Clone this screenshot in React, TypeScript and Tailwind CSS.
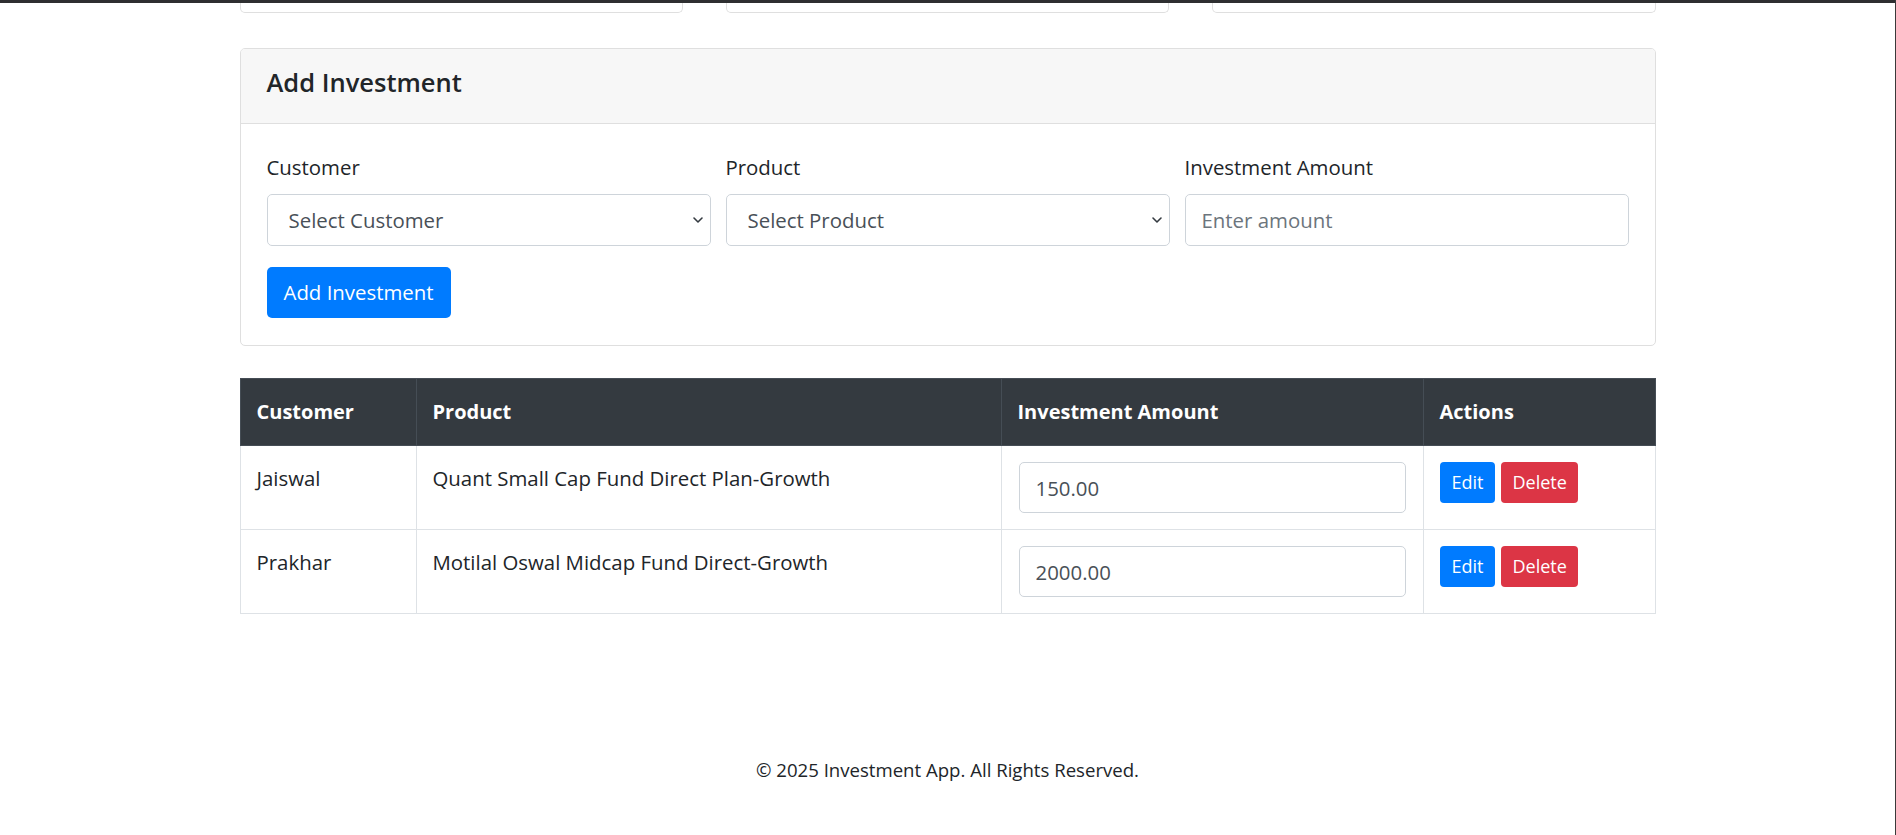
import React from "react";

const rows = [
  { customer: "Jaiswal", product: "Quant Small Cap Fund Direct Plan-Growth", amount: "150.00" },
  { customer: "Prakhar", product: "Motilal Oswal Midcap Fund Direct-Growth", amount: "2000.00" },
];

function Chevron() {
  return (
    <svg width="12" height="8" viewBox="0 0 12 8" className="pointer-events-none absolute right-[7px] top-1/2 -translate-y-1/2">
      <path d="M2 2 L6 6 L10 2" fill="none" stroke="#343a40" strokeWidth="1.6" strokeLinecap="round" strokeLinejoin="round" />
    </svg>
  );
}

function SelectBox({ label }: { label: string }) {
  return (
    <div className="relative">
      <select
        defaultValue=""
        className="w-full h-[52px] appearance-none bg-white border border-[#ced4da] rounded-[5px] pl-[21px] pr-[30px] text-[20.4px] text-[#495057] outline-none"
      >
        <option value="">{label}</option>
      </select>
      <Chevron />
    </div>
  );
}

export default function App() {
  return (
    <div className="min-h-[835px] bg-white border-r border-[#3a3a3a] font-['Open_Sans',sans-serif] text-[#212529]">
      <div className="h-[3px] bg-[#2e2f31]" />
      <div className="w-[1416px] mx-auto">
        <div className="grid grid-cols-3 gap-[43px]">
          <div className="h-[10px] border border-t-0 border-[#dfdfdf] rounded-b-[5px]" />
          <div className="h-[10px] border border-t-0 border-[#dfdfdf] rounded-b-[5px]" />
          <div className="h-[10px] border border-t-0 border-[#dfdfdf] rounded-b-[5px]" />
        </div>

        <div className="mt-[35px] border border-[#dfdfdf] rounded-[5px] overflow-hidden">
          <div className="h-[75px] bg-[#f7f7f7] border-b border-[#dfdfdf] px-[26px] pb-[7px] flex items-center">
            <h4 className="text-[25.5px] font-semibold leading-none">Add Investment</h4>
          </div>
          <div className="px-[26px] pt-[28px] pb-[27px]">
            <div className="grid grid-cols-3 gap-[15px]">
              <div>
                <label className="block h-[30px] leading-[30px] text-[20.4px] mb-[12px]">Customer</label>
                <SelectBox label="Select Customer" />
              </div>
              <div>
                <label className="block h-[30px] leading-[30px] text-[20.4px] mb-[12px]">Product</label>
                <SelectBox label="Select Product" />
              </div>
              <div>
                <label className="block h-[30px] leading-[30px] text-[20.4px] mb-[12px]">Investment Amount</label>
                <input
                  placeholder="Enter amount"
                  className="w-full h-[52px] bg-white border border-[#ced4da] rounded-[5px] px-[16px] text-[20.4px] text-[#495057] placeholder:text-[#6c757d] outline-none"
                />
              </div>
            </div>
            <button className="mt-[21px] h-[51px] px-[17px] bg-[#007bff] text-white text-[20.4px] rounded-[5px]">
              Add Investment
            </button>
          </div>
        </div>

        <table className="mt-[32px] w-full border-collapse text-[20.4px]">
          <thead>
            <tr className="h-[67px] bg-[#343a40] text-white">
              <th className="w-[176px] text-left text-[20px] font-bold px-[16px] border border-[#454d55]">Customer</th>
              <th className="w-[585px] text-left text-[20px] font-bold px-[16px] border border-[#454d55]">Product</th>
              <th className="w-[422px] text-left text-[20px] font-bold px-[16px] border border-[#454d55]">Investment Amount</th>
              <th className="text-left text-[20px] font-bold px-[16px] border border-[#454d55]">Actions</th>
            </tr>
          </thead>
          <tbody>
            {rows.map((r) => (
              <tr key={r.customer} className="h-[84px]">
                <td className="align-top px-[16px] pt-[17px] leading-[30px] border border-[#dee2e6]">{r.customer}</td>
                <td className="align-top px-[16px] pt-[17px] leading-[30px] border border-[#dee2e6]">{r.product}</td>
                <td className="align-top px-[17px] pt-[16px] border border-[#dee2e6]">
                  <input
                    defaultValue={r.amount}
                    className="w-full h-[51px] bg-white border border-[#ced4da] rounded-[5px] px-[16px] text-[20.4px] text-[#495057] outline-none"
                  />
                </td>
                <td className="align-top px-[16px] pt-[16px] border border-[#dee2e6]">
                  <div className="flex gap-[6px]">
                    <button className="h-[41px] px-[12px] bg-[#007bff] text-white text-[18px] rounded-[4px]">Edit</button>
                    <button className="h-[41px] px-[11px] bg-[#dc3545] text-white text-[18px] rounded-[4px]">Delete</button>
                  </div>
                </td>
              </tr>
            ))}
          </tbody>
        </table>

        <footer className="mt-[141px] text-center text-[18.6px] leading-[30px]">
          © 2025 Investment App. All Rights Reserved.
        </footer>
      </div>
    </div>
  );
}
